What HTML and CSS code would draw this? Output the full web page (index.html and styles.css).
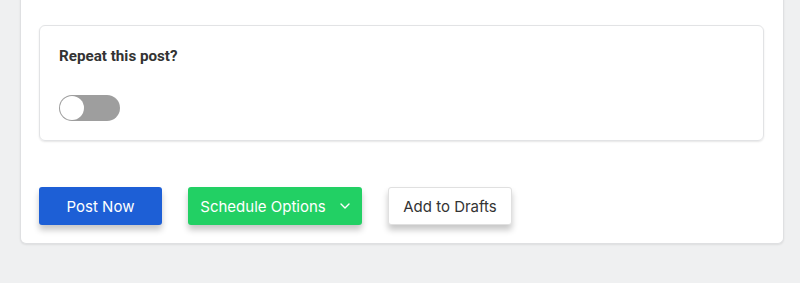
FILE: index.html
```html
<!DOCTYPE html>
<html lang="en">
<head>
  <meta charset="UTF-8">
  <meta name="viewport" content="width=device-width, initial-scale=1.0">
  <title>New Post</title>
  <link rel="stylesheet" href="styles.css">
</head>
<body>
  <div class="page">
    <div class="panel">
      <!-- Repeat settings -->
      <div class="repeat-card">
        <h3 class="repeat-title">Repeat this post?</h3>
        <label class="toggle">
          <input type="checkbox">
          <span class="track"><span class="knob"></span></span>
        </label>
      </div>

      <!-- Actions -->
      <div class="actions">
        <button class="btn btn-blue">Post Now</button>
        <button class="btn btn-green">Schedule Options
          <svg class="chevron" width="10" height="6" viewBox="0 0 10 6"><path d="M1 1l4 4 4-4" fill="none" stroke="#fff" stroke-width="1.4" stroke-linecap="round" stroke-linejoin="round"/></svg>
        </button>
        <button class="btn btn-white">Add to Drafts</button>
      </div>
    </div>
  </div>
</body>
</html>
```
FILE: styles.css
```css
/* General */
html, body {
  margin: 0;
  padding: 0;
  height: 100%;
}
body {
  background: #eff0f1;
  font-family: 'Inter', 'Roboto', sans-serif;
  overflow: hidden;
}
.page {
  padding: 0 16px 0 20px;
}
.panel {
  margin-top: -10px;
  padding: 35px 19px 18px 18px;
  background: #fff;
  border: 1px solid #dfe0e2;
  border-top: none;
  border-radius: 0 0 6px 6px;
  box-shadow: 0 1px 2px rgba(0, 0, 0, 0.08);
}
/* Repeat card */
.repeat-card {
  border: 1px solid #e2e3e5;
  border-radius: 6px;
  padding: 21px 19px 19px 19px;
  box-shadow: 0 1px 2px rgba(0, 0, 0, 0.1);
}
.repeat-title {
  margin: 0 0 30px 0;
  font-family: 'Roboto', sans-serif;
  font-size: 15.2px;
  font-weight: bold;
  line-height: 18px;
  color: #333;
}
.toggle {
  display: block;
  width: 61px;
  cursor: pointer;
}
.toggle input {
  display: none;
}
.track {
  display: block;
  position: relative;
  width: 61px;
  height: 26px;
  border-radius: 13px;
  background: #9e9e9e;
}
.knob {
  position: absolute;
  top: 1px;
  left: 1px;
  width: 24px;
  height: 24px;
  border-radius: 50%;
  background: #fff;
}
/* Buttons */
.actions {
  display: flex;
  gap: 26px;
  margin-top: 46px;
}
.btn {
  display: flex;
  align-items: center;
  justify-content: center;
  height: 38px;
  border: none;
  border-radius: 3px;
  font-family: 'Inter', sans-serif;
  font-size: 15px;
  cursor: pointer;
  box-shadow: 0 5px 6px rgba(0, 0, 0, 0.22);
}
.btn-blue {
  width: 123px;
  background: #1d5fd6;
  color: #fff;
}
.btn-green {
  width: 174px;
  gap: 14px;
  background: #22d064;
  color: #fff;
}
.btn-white {
  width: 124px;
  background: #fff;
  color: #333;
  border: 1px solid #e0e0e0;
}
```
